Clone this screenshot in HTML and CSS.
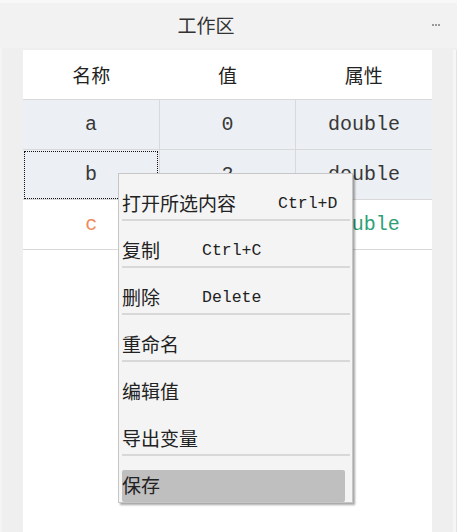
FILE: index.html
```html
<!DOCTYPE html>
<html lang="zh-CN">
<head>
    <meta charset="UTF-8">
    <meta name="viewport" content="width=device-width, initial-scale=1.0">
    <title>工作区</title>
    <link rel="stylesheet" href="styles.css">
</head>
<body>
    <div class="app">
        <div class="header">
            <div class="title">工作区</div>
            <div class="more"><span></span><span></span><span></span></div>
        </div>
        <div class="main">
            <div class="panel">
                <table class="vars">
                    <thead>
                        <tr>
                            <th>名称</th>
                            <th>值</th>
                            <th>属性</th>
                        </tr>
                    </thead>
                    <tbody>
                        <tr class="selected">
                            <td>a</td>
                            <td>0</td>
                            <td>double</td>
                        </tr>
                        <tr class="selected">
                            <td class="focused">b</td>
                            <td>2</td>
                            <td>double</td>
                        </tr>
                        <tr class="plain">
                            <td class="name-c">c</td>
                            <td></td>
                            <td class="type-c">double</td>
                        </tr>
                    </tbody>
                </table>
            </div>
            <div class="scrollbar"></div>
        </div>

        <ul class="context-menu">
            <li class="item"><span class="label">打开所选内容</span><span class="key">Ctrl+D</span></li>
            <li class="item"><span class="label">复制</span><span class="key">Ctrl+C</span></li>
            <li class="item"><span class="label">删除</span><span class="key">Delete</span></li>
            <li class="item"><span class="label">重命名</span></li>
            <li class="item no-sep"><span class="label">编辑值</span></li>
            <li class="item"><span class="label">导出变量</span></li>
            <li class="item no-sep active"><span class="label">保存</span></li>
        </ul>
    </div>
</body>
</html>
```

FILE: styles.css
```css
body {
    margin: 0;
    font-family: "Noto Sans CJK SC", "Noto Sans", sans-serif;
    background: #efefef;
    color: #222222;
}

.app {
    position: relative;
    height: 532px;
    display: flex;
    flex-direction: column;
    overflow: hidden;
}

.header {
    height: 45px;
    border-top: 3px solid #f8f8f8;
    background: #f2f2f2;
    display: flex;
    align-items: center;
}

.title {
    width: 412px;
    text-align: center;
    font-size: 19px;
    color: #333333;
    margin-top: -2px;
}

.more {
    display: flex;
    gap: 1px;
    margin-left: 20px;
    margin-top: -2px;
}

.more span {
    width: 2px;
    height: 2px;
    background: #9a9a9a;
}

.main {
    flex: 1;
    display: flex;
    padding-top: 2px;
    border-left: 2px solid #f4f4f4;
}

.panel {
    margin-left: 21px;
    width: 409px;
    background: #ffffff;
}

.scrollbar {
    margin-left: 21px;
    width: 3px;
    background: #f6f6f6;
    border-right: 1px solid #e4e4e4;
}

.vars {
    width: 409px;
    border-collapse: collapse;
    table-layout: fixed;
}

.vars th {
    height: 49px;
    font-weight: normal;
    font-size: 19px;
    color: #222222;
    border-bottom: 1px solid #d9d9d9;
    padding: 0;
}

.vars td {
    height: 49px;
    padding: 0;
    text-align: center;
    font-family: "Liberation Mono", monospace;
    font-size: 20px;
    color: #383838;
    border-bottom: 1px solid #d9d9d9;
}

.vars tr.selected td {
    background: #eceff3;
    border-left: 1px solid #d9d9d9;
}

.vars tr.selected td:first-child {
    border-left: none;
}

.vars td.focused {
    outline: 1px dotted #111111;
    outline-offset: -2px;
}

.vars td.name-c {
    color: #f08a5d;
}

.vars td.type-c {
    color: #2f9f76;
}

.context-menu {
    position: absolute;
    left: 118px;
    top: 173px;
    width: 228px;
    height: 328px;
    margin: 0;
    padding: 0 2px 0 3px;
    list-style: none;
    background: #f4f4f4;
    border: 1px solid #c6c6c6;
    box-shadow: 2px 2px 2px rgba(0, 0, 0, 0.35);
}

.item {
    height: 30px;
    margin-top: 14px;
    padding-bottom: 1px;
    border-bottom: 2px solid #d8d8d8;
    display: flex;
    align-items: center;
    font-size: 19px;
    color: #222222;
    white-space: nowrap;
}

.item.no-sep {
    border-bottom-color: transparent;
}

.item.active {
    margin-right: 5px;
    background: #bfbfbf;
    border-radius: 2px;
    padding-bottom: 0;
}

.label {
    line-height: 30px;
}

.key {
    margin-left: 42px;
    font-family: "Liberation Mono", monospace;
    font-size: 16.5px;
    color: #222222;
}
```
